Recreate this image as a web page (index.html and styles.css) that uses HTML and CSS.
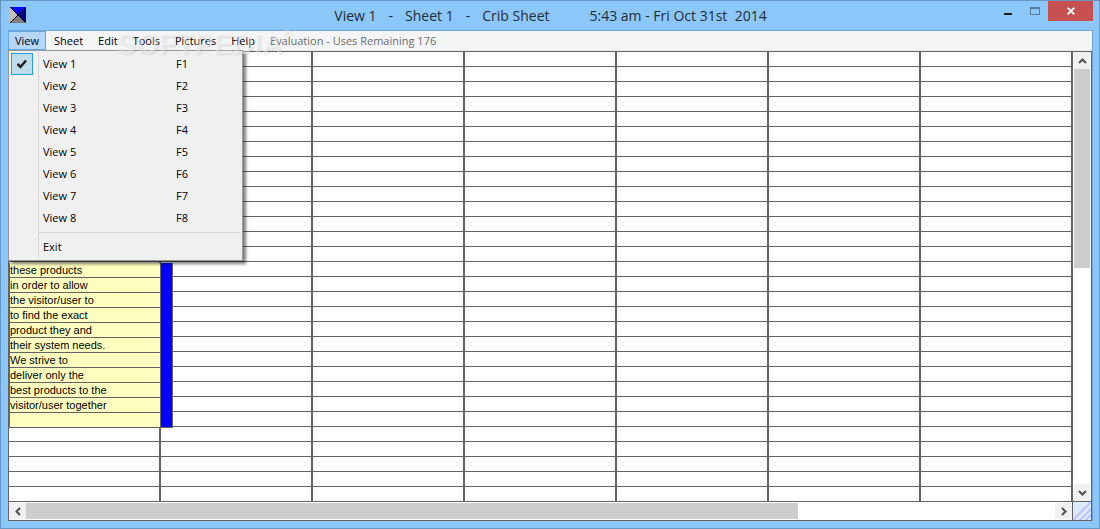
FILE: index.html
```html
<!DOCTYPE html>
<html lang="en">
<head>
  <meta charset="UTF-8" />
  <meta name="viewport" content="width=device-width, initial-scale=1.0"/>
  <title>Crib Sheet</title>
  <link rel="stylesheet" href="styles.css">
</head>
<body>

  <div class="window">
    <header class="titlebar">
      <svg class="app-icon" width="16" height="16" viewBox="0 0 16 16" shape-rendering="crispEdges">
        <path d="M0 0h16L8 8z" fill="#0000ff"/>
        <path d="M16 0v16L8 8z" fill="#000080"/>
        <path d="M0 16h16L8 8z" fill="#808080"/>
        <path d="M0 0v16l8-8z" fill="#c0c0c0"/>
        <path d="M0 0l16 16M16 0L0 16" stroke="#000"/>
      </svg>
      <h1 class="title">
        <span>View 1</span><span>-</span><span>Sheet 1</span><span>-</span><span>Crib Sheet</span>
        <span class="clock">5:43 am - Fri Oct 31st&nbsp; 2014</span>
      </h1>
      <div class="controls">
        <button class="control" aria-label="Minimize">
          <svg width="10" height="10" viewBox="0 0 10 10"><path d="M1 7h8v2H1z" fill="#1e1e1e"/></svg>
        </button>
        <button class="control" aria-label="Maximize">
          <svg width="10" height="8" viewBox="0 0 10 8" shape-rendering="crispEdges"><path d="M0 0h10v8H0zM1 2v5h8V2z" fill="#587a99" fill-rule="evenodd"/></svg>
        </button>
        <button class="control close" aria-label="Close">
          <svg width="8" height="8" viewBox="0 0 8 8"><path d="M.7.7l6.6 6.6M7.3.7L.7 7.3" stroke="#fff" stroke-width="1.8"/></svg>
        </button>
      </div>
    </header>

    <main class="client">
      <nav class="menubar">
        <button class="menu-item open">View</button>
        <button class="menu-item">Sheet</button>
        <button class="menu-item">Edit</button>
        <button class="menu-item">Tools</button>
        <button class="menu-item">Pictures</button>
        <button class="menu-item">Help</button>
        <button class="menu-item" disabled>Evaluation - Uses Remaining 176</button>
      </nav>

      <div class="workspace">
        <div class="sheet">
          <table class="grid"><tbody id="gridBody"></tbody></table>
          <div class="note">
            <ul class="note-lines">
              <li>these products</li>
              <li>in order to allow</li>
              <li>the visitor/user to</li>
              <li>to find the exact</li>
              <li>product they and</li>
              <li>their system needs.</li>
              <li>We strive to</li>
              <li>deliver only the</li>
              <li>best products to the</li>
              <li>visitor/user together</li>
              <li></li>
            </ul>
            <div class="note-bar"></div>
          </div>
        </div>

        <div class="scroll vertical">
          <button class="arrow" aria-label="Scroll up">
            <svg width="9" height="6" viewBox="0 0 9 6"><path d="M1 5l3.500-3.500L8 5" fill="none" stroke="#505050" stroke-width="2"/></svg>
          </button>
          <div class="track"><div class="thumb"></div></div>
          <button class="arrow" aria-label="Scroll down">
            <svg width="9" height="6" viewBox="0 0 9 6"><path d="M1 1l3.500 3.500L8 1" fill="none" stroke="#505050" stroke-width="2"/></svg>
          </button>
        </div>

        <div class="scroll horizontal">
          <button class="arrow" aria-label="Scroll left">
            <svg width="6" height="9" viewBox="0 0 6 9"><path d="M5 1L1.500 4.500 5 8" fill="none" stroke="#505050" stroke-width="2"/></svg>
          </button>
          <div class="track"><div class="thumb"></div></div>
          <button class="arrow" aria-label="Scroll right">
            <svg width="6" height="9" viewBox="0 0 6 9"><path d="M1 1l3.500 3.500L1 8" fill="none" stroke="#505050" stroke-width="2"/></svg>
          </button>
        </div>

        <svg class="grip" viewBox="0 0 18 18">
          <path d="M0 18L18 0M6 19L19 6M12 19L19 12" stroke="#bcbcff" stroke-width="1.800" fill="none"/>
        </svg>
      </div>

      <div class="dropdown">
        <div class="gutter"><span class="check"><svg width="12" height="10" viewBox="0 0 12 10"><path d="M1.500 5l3 3L10 1.500" fill="none" stroke="#222" stroke-width="2.500"/></svg></span></div>
        <div class="entries">
          <button class="entry"><span>View 1</span><span>F1</span></button>
          <button class="entry"><span>View 2</span><span>F2</span></button>
          <button class="entry"><span>View 3</span><span>F3</span></button>
          <button class="entry"><span>View 4</span><span>F4</span></button>
          <button class="entry"><span>View 5</span><span>F5</span></button>
          <button class="entry"><span>View 6</span><span>F6</span></button>
          <button class="entry"><span>View 7</span><span>F7</span></button>
          <button class="entry"><span>View 8</span><span>F8</span></button>
          <hr class="separator">
          <button class="entry"><span>Exit</span></button>
        </div>
      </div>

      <div class="watermark">SOFTPEDIA<sup>®</sup></div>
    </main>
  </div>

  <script>
    const ROWS = 30;
    const COLUMNS = 7;
    const body = document.getElementById("gridBody");

    for (let r = 0; r < ROWS; r++) {
      const row = body.insertRow();
      for (let c = 0; c < COLUMNS; c++) row.insertCell();
    }
  </script>
</body>
</html>
```

FILE: styles.css
```css
* {
  box-sizing: border-box;
}

body {
  margin: 0;
  font-family: "Open Sans", "Noto Sans", sans-serif;
  font-size: 11px;
  color: #000;
}

button {
  border: none;
  padding: 0;
  background: none;
  font: inherit;
  color: inherit;
}

svg {
  display: block;
}

.window {
  display: flex;
  flex-direction: column;
  height: 100vh;
  padding: 0 6px 7px 7px;
  border: 1px solid #6996c3;
  background: #8cc7fa;
}

.titlebar {
  display: grid;
  grid-template-columns: 1fr auto 1fr;
  flex: none;
  height: 29px;
}

.app-icon {
  margin: 6px 0 0 2px;
}

.title {
  display: flex;
  gap: 12px;
  margin: 0;
  font-size: 14px;
  font-weight: normal;
  line-height: 30px;
  white-space: nowrap;
  color: #222c35;
}

.clock {
  margin-left: 28px;
}

.controls {
  display: flex;
  justify-content: flex-end;
  height: 20px;
}

.control {
  display: flex;
  align-items: center;
  justify-content: center;
  width: 27px;
}

.control.close {
  width: 45px;
  background: #c75050;
}

.client {
  position: relative;
  display: flex;
  flex-direction: column;
  flex: 1;
  min-height: 0;
  border: 1px solid #6fa5d6;
  border-width: 1px 1px 0 0;
}

.menubar {
  display: flex;
  gap: 1px;
  flex: none;
  height: 20px;
  background: #f4f5f7;
  border-bottom: 1px solid #e8e8e8;
}

.menu-item {
  padding: 0 6px;
  border: 1px solid transparent;
  line-height: 18px;
  white-space: nowrap;
}

.menu-item.open {
  background: #b5d7fb;
  border-color: #66a7e8;
}

.menu-item:disabled {
  color: #6d6d6d;
}

.workspace {
  display: grid;
  grid-template-columns: 1fr 18px;
  grid-template-rows: 1fr 18px;
  flex: 1;
  min-height: 0;
  border: 1px solid #646464;
  background: #fff;
}

.sheet {
  position: relative;
  overflow: hidden;
}

.grid {
  width: 100%;
  table-layout: fixed;
  border-collapse: separate;
  border-spacing: 0;
}

.grid td {
  height: 15px;
  padding: 0;
  border-right: 2px solid #646464;
  border-bottom: 1px solid #646464;
}

/* pinned on the sheet, below the open menu */
.note {
  position: absolute;
  top: 211px;
  left: 0;
  display: flex;
  border-bottom: 1px solid #646464;
  font-family: "Liberation Sans", Arial, sans-serif;
}

.note-lines {
  width: 151px;
  margin: 0;
  padding: 0;
  list-style: none;
  background: #ffffc0;
  border-left: 1px solid #646464;
}

.note-lines li {
  height: 15px;
  line-height: 15px;
  border-bottom: 1px solid #646464;
}

.note-lines li:last-child {
  height: 14px;
  border-bottom: none;
}

.note-bar {
  width: 13px;
  background: #0000ff;
  border: 1px solid #646464;
  border-width: 0 1px;
}

.scroll {
  display: flex;
}

.scroll.vertical {
  flex-direction: column;
  padding: 0 1px;
  border-bottom: 1px solid #646464;
}

.scroll.horizontal {
  padding: 1px 0;
  border-right: 1px solid #646464;
}

.arrow {
  display: flex;
  align-items: center;
  justify-content: center;
  flex: none;
  background: #f0f0f0;
}

.vertical .arrow {
  height: 17px;
}

.horizontal .arrow {
  width: 17px;
}

.track {
  flex: 1;
}

.thumb {
  background: #cdcdcd;
}

.vertical .thumb {
  height: 48%;
}

.horizontal .thumb {
  width: 75%;
  height: 100%;
}

.grip {
  width: 100%;
  height: 100%;
  background: #dcebff;
}

.dropdown {
  position: absolute;
  top: 19px;
  left: 0;
  display: flex;
  width: 235px;
  padding: 2px;
  background: #f0f0f0;
  border: 1px solid #979797;
  box-shadow: 3px 3px 3px rgba(0, 0, 0, 0.5);
}

.gutter {
  width: 28px;
  border-right: 1px solid #d7d7d7;
}

.check {
  display: flex;
  align-items: center;
  justify-content: center;
  width: 22px;
  height: 22px;
  background: #c0dcea;
  border: 1px solid #26a0da;
}

.entries {
  flex: 1;
}

.entry {
  display: grid;
  grid-template-columns: 133px 1fr;
  width: 100%;
  padding-left: 4px;
  line-height: 22px;
  text-align: left;
}

.separator {
  height: 1px;
  margin: 3px 0;
  border: none;
  background: #d7d7d7;
}

.watermark {
  position: absolute;
  top: -3px;
  left: 109px;
  font-family: "Liberation Sans", Arial, sans-serif;
  font-size: 29px;
  font-weight: bold;
  line-height: 32px;
  color: rgba(255, 255, 255, 0.4);
  text-shadow: 1px 1px 2px rgba(0, 0, 0, 0.1);
  pointer-events: none;
}

.watermark sup {
  font-size: 11px;
  line-height: 11px;
  vertical-align: top;
}
```
